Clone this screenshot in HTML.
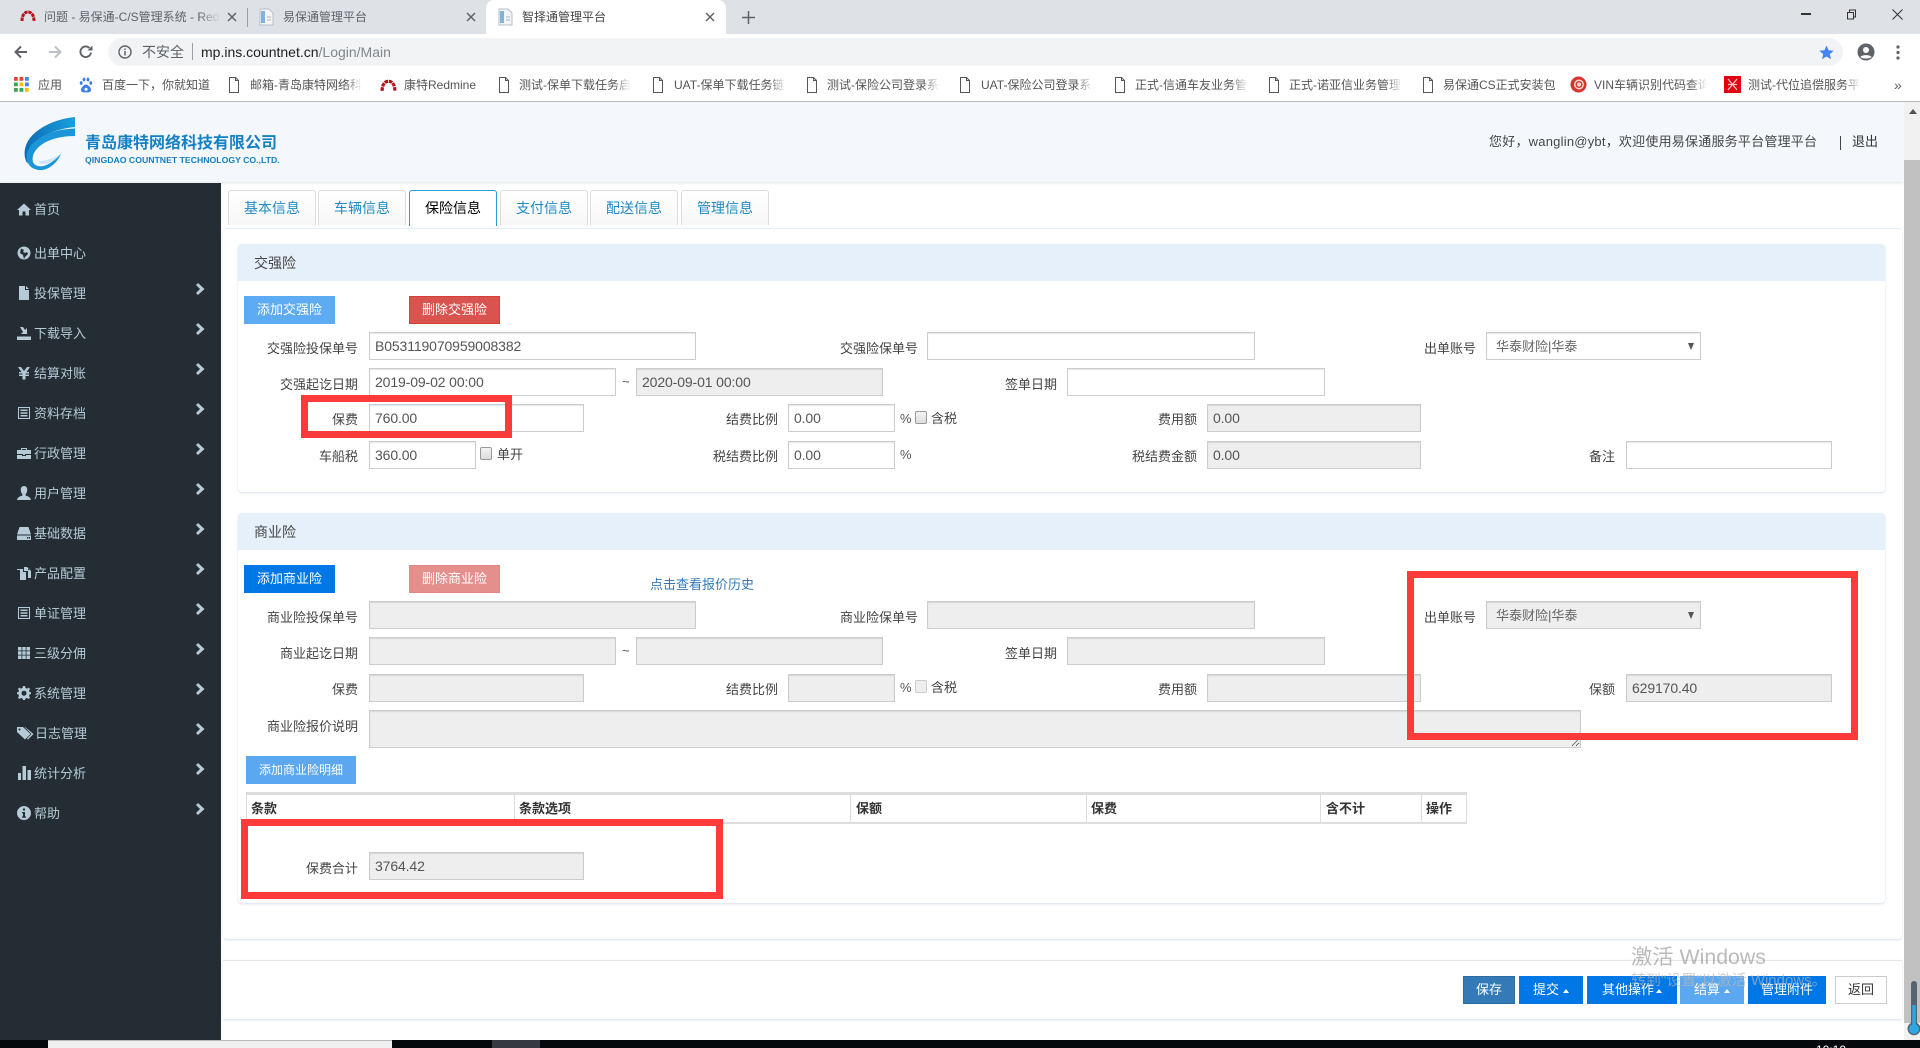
<!DOCTYPE html>
<html lang="zh-CN">
<head>
<meta charset="utf-8">
<title>智择通管理平台</title>
<style>
*{box-sizing:border-box}
html,body{margin:0;padding:0;width:1920px;height:1048px;overflow:hidden;background:#fff}
body{position:relative;font-family:"Liberation Sans","Noto Sans CJK SC",sans-serif;font-size:13px;color:#333}
div,span,svg,input,textarea,a,button{position:absolute}
.t{white-space:nowrap;height:20px;line-height:20px}
.l{white-space:nowrap;height:20px;line-height:20px;width:130px;text-align:right;color:#444}
input,textarea{margin:0;height:28px;border:1px solid #ccc;box-shadow:inset 0 1px 1px rgba(0,0,0,.1);background:#fff;padding:0 5px;font:14px "Liberation Sans","Noto Sans CJK SC",sans-serif;letter-spacing:-.12px;color:#555;outline:0;border-radius:0}
input:disabled,textarea:disabled{background:#eee;color:#555;-webkit-text-fill-color:#555;opacity:1}
.sel{height:28px;border:1px solid #ccc;box-shadow:inset 0 1px 1px rgba(0,0,0,.1);background:#fff;width:215px;left:1486px;color:#666;line-height:28px;padding-left:9px;font-size:13px}
.sel i{position:absolute;right:6px;top:10px;width:0;height:0;border-left:3px solid transparent;border-right:3px solid transparent;border-top:7px solid #555}
.btn{height:28px;line-height:28px;text-align:center;color:#fff;font-size:13px;border:0;padding:0;white-space:nowrap}
.cb{width:12px;height:13px;border:1px solid #999;border-radius:2px;background:linear-gradient(#f3f3f3,#ddd)}
.cbd{border-color:#ccc;background:#eee}
.tab{top:190px;height:35px;width:88px;border:1px solid #ddd;border-bottom:0;border-radius:3px 3px 0 0;background:linear-gradient(#fff,#f7f7f7);text-align:center;line-height:35px;font-size:14px;color:#1f8ac4}
.panel{left:238px;width:1647px;background:#fff;border-radius:4px;box-shadow:0 1px 2px rgba(120,150,190,.3)}
.phead{left:238px;width:1647px;height:37px;background:#e6f0fa;border-radius:4px 4px 0 0;line-height:39px;padding-left:16px;font-size:14px;color:#444}
.nav{left:34px;white-space:nowrap;height:20px;line-height:20px;color:#b6cbd6;font-size:13px}
.ic{left:17px;width:14px;height:14px;fill:#b6cbd6}
.ch{left:196px;width:9px;height:12px}
.th{top:795px;height:27px;line-height:27px;font-weight:bold;font-size:13px;color:#333;white-space:nowrap}
.vl{top:795px;height:27px;width:1px;background:#ddd}
.red{border:7px solid #ff3a3a;background:transparent}
.bm{top:75px;height:20px;line-height:20px;font-size:12px;color:#555;white-space:nowrap;overflow:hidden;-webkit-mask-image:linear-gradient(90deg,#000 85%,transparent)}
.bmf{-webkit-mask-image:none}
.doc{top:77px;width:12px;height:16px;fill:none;stroke:#555;stroke-width:1}
.ct{top:7px;height:20px;line-height:20px;font-size:12px;color:#5f6368;white-space:nowrap}
.x{top:12px;width:10px;height:10px;stroke:#5f6368;stroke-width:1.5;fill:none}
.fb{top:976px;height:28px;line-height:28px;text-align:center;background:#0077e6;color:#fff;font-size:13px;white-space:nowrap}
.fb i{position:absolute;top:13px;width:0;height:0;border-left:3.5px solid transparent;border-right:3.5px solid transparent;border-bottom:4px solid #fff}
</style>
</head>
<body>
<svg width="0" height="0" style="left:0;top:0">
  <symbol id="d" viewBox="0 0 12 16"><path d="M1.5 .5H7.5L10.5 3.5V15.5H1.5ZM7.5 .5V3.5H10.5"/></symbol>
  <symbol id="c" viewBox="0 0 9 12"><path d="M0 2L2 0L8.500 6L2 12L0 10L4 6Z" fill="#b6cbd6"/></symbol>
  <symbol id="rm" viewBox="0 0 16 12"><path d="M2 11C2 6 4 2 8 2S14 6 14 11" fill="none" stroke="#b5121b" stroke-width="3" stroke-dasharray="3.4 .7"/></symbol>
</svg>

<!-- browser chrome -->
<div style="left:0;top:0;width:1920px;height:34px;background:#dee1e6"></div>
<div style="left:486px;top:0;width:240px;height:34px;background:#fff;border-radius:8px 8px 0 0"></div>
<svg style="left:20px;top:10px;width:16px;height:12px"><use href="#rm"/></svg>
<div class="ct" style="left:44px;width:176px;overflow:hidden;-webkit-mask-image:linear-gradient(90deg,#000 88%,transparent)">问题 - 易保通-C/S管理系统 - Redmine</div>
<svg class="x" style="left:227px" viewBox="0 0 10 10"><path d="M1 1L9 9M9 1L1 9"/></svg>
<div style="left:247px;top:8px;width:1px;height:19px;background:#9aa0a6"></div>
<svg style="left:259px;top:8px;width:15px;height:18px" viewBox="0 0 15 18"><path d="M1 1H10L14 5V17H1Z" fill="#f2f4f6" stroke="#b6bfc8"/><rect x="2" y="3" width="4" height="12" fill="#7fb3da"/><path d="M8 9H12M8 12H12" stroke="#aab3bb"/></svg>
<div class="ct" style="left:283px">易保通管理平台</div>
<svg class="x" style="left:466px" viewBox="0 0 10 10"><path d="M1 1L9 9M9 1L1 9"/></svg>
<svg style="left:498px;top:8px;width:15px;height:18px" viewBox="0 0 15 18"><path d="M1 1H10L14 5V17H1Z" fill="#f2f4f6" stroke="#b6bfc8"/><rect x="2" y="3" width="4" height="12" fill="#7fb3da"/><path d="M8 9H12M8 12H12" stroke="#aab3bb"/></svg>
<div class="ct" style="left:522px;color:#444">智择通管理平台</div>
<svg class="x" style="left:705px" viewBox="0 0 10 10"><path d="M1 1L9 9M9 1L1 9"/></svg>
<svg style="left:742px;top:11px;width:13px;height:13px" viewBox="0 0 13 13"><path d="M6.500 0V13M0 6.500H13" stroke="#5f6368" stroke-width="1.500"/></svg>
<div style="left:1801px;top:13px;width:10px;height:1.500px;background:#333"></div>
<svg style="left:1846px;top:9px;width:11px;height:11px" viewBox="0 0 11 11"><path d="M1.500 3.500H7.500V10H1.500ZM3.500 3.500V1H9.500V8H7.500" fill="none" stroke="#333"/></svg>
<svg style="left:1892px;top:9px;width:11px;height:11px" viewBox="0 0 11 11"><path d="M.5 .5L10.500 10.500M10.500 .5L.5 10.500" stroke="#333"/></svg>

<div style="left:0;top:34px;width:1920px;height:67px;background:#fff"></div>
<div style="left:108px;top:38px;width:1735px;height:28px;background:#f1f3f4;border-radius:14px"></div>
<svg style="left:13px;top:44px;width:16px;height:16px" viewBox="0 0 16 16"><path d="M14 8H3M8 2.500L2.500 8L8 13.500" fill="none" stroke="#5f6368" stroke-width="2"/></svg>
<svg style="left:47px;top:44px;width:16px;height:16px" viewBox="0 0 16 16"><path d="M2 8H13M8 2.500L13.500 8L8 13.500" fill="none" stroke="#bdc1c6" stroke-width="2"/></svg>
<svg style="left:78px;top:44px;width:16px;height:16px" viewBox="0 0 16 16"><path d="M13 8.500A5.300 5.300 0 1 1 11.500 4" fill="none" stroke="#5f6368" stroke-width="1.900"/><path d="M9.500 6.500H14.500V1.500Z" fill="#5f6368"/></svg>
<svg style="left:118px;top:45px;width:14px;height:14px" viewBox="0 0 14 14"><circle cx="7" cy="7" r="6" fill="none" stroke="#5f6368" stroke-width="1.400"/><path d="M7 6V10.500M7 3.500V5" stroke="#5f6368" stroke-width="1.500"/></svg>
<div class="t" style="left:142px;top:42px;font-size:14px;color:#5f6368">不安全</div>
<div style="left:192px;top:43px;width:1px;height:17px;background:#9aa0a6"></div>
<div class="t" style="left:201px;top:42px;font-size:14px;color:#202124">mp.ins.countnet.cn<span style="position:static;color:#80868b">/Login/Main</span></div>
<svg style="left:1819px;top:45px;width:15px;height:15px" viewBox="0 0 15 15"><path d="M7.500 .5L9.600 5.300L14.700 5.700L10.800 9.100L12 14.200L7.500 11.500L3 14.200L4.200 9.100L.3 5.700L5.400 5.300Z" fill="#4285f4"/></svg>
<svg style="left:1857px;top:43px;width:18px;height:18px" viewBox="0 0 18 18"><circle cx="9" cy="9" r="8.500" fill="#5f6368"/><circle cx="9" cy="7" r="3" fill="#fff"/><path d="M3.500 14C5 11.500 13 11.500 14.500 14C13 16 5 16 3.500 14Z" fill="#fff"/></svg>
<svg style="left:1896px;top:45px;width:4px;height:15px" viewBox="0 0 4 15"><circle cx="2" cy="2" r="1.600" fill="#5f6368"/><circle cx="2" cy="7.500" r="1.600" fill="#5f6368"/><circle cx="2" cy="13" r="1.600" fill="#5f6368"/></svg>

<!-- bookmarks -->
<svg style="left:14px;top:77px;width:15px;height:15px" viewBox="0 0 15 15"><g fill="#ea4335"><rect width="3.800" height="3.800"/><rect x="5.500" width="3.800" height="3.800"/></g><rect x="11" width="3.800" height="3.800" fill="#4285f4"/><rect y="5.500" width="3.800" height="3.800" fill="#34a853"/><rect x="5.500" y="5.500" width="3.800" height="3.800" fill="#fbbc05"/><rect x="11" y="5.500" width="3.800" height="3.800" fill="#4285f4"/><rect y="11" width="3.800" height="3.800" fill="#34a853"/><rect x="5.500" y="11" width="3.800" height="3.800" fill="#34a853"/><rect x="11" y="11" width="3.800" height="3.800" fill="#fbbc05"/></svg>
<div class="bm bmf" style="left:38px;width:30px">应用</div>
<svg style="left:79px;top:77px;width:14px;height:16px" viewBox="0 0 14 16"><g fill="#3b7de8"><ellipse cx="2.200" cy="6" rx="1.400" ry="1.900"/><ellipse cx="11.800" cy="6" rx="1.400" ry="1.900"/><ellipse cx="5" cy="2.500" rx="1.400" ry="1.900"/><ellipse cx="9" cy="2.500" rx="1.400" ry="1.900"/><path d="M7 7.500C5 7.500 2 10.500 2 13C2 15 4 15.800 7 15.200C10 15.800 12 15 12 13C12 10.500 9 7.500 7 7.500Z"/></g><circle cx="7" cy="12.300" r="1.600" fill="#fff"/></svg>
<div class="bm bmf" style="left:102px;width:110px">百度一下，你就知道</div>
<svg class="doc" style="left:228px"><use href="#d"/></svg>
<div class="bm" style="left:250px;width:112px">邮箱-青岛康特网络科技有限公司</div>
<svg style="left:380px;top:79px;width:17px;height:13px"><use href="#rm"/></svg>
<div class="bm bmf" style="left:404px;width:78px">康特Redmine</div>
<svg class="doc" style="left:498px"><use href="#d"/></svg>
<div class="bm" style="left:519px;width:112px">测试-保单下载任务启动</div>
<svg class="doc" style="left:652px"><use href="#d"/></svg>
<div class="bm" style="left:674px;width:112px">UAT-保单下载任务链接</div>
<svg class="doc" style="left:806px"><use href="#d"/></svg>
<div class="bm" style="left:827px;width:113px">测试-保险公司登录系统</div>
<svg class="doc" style="left:959px"><use href="#d"/></svg>
<div class="bm" style="left:981px;width:112px">UAT-保险公司登录系统</div>
<svg class="doc" style="left:1114px"><use href="#d"/></svg>
<div class="bm" style="left:1135px;width:113px">正式-信通车友业务管理</div>
<svg class="doc" style="left:1268px"><use href="#d"/></svg>
<div class="bm" style="left:1289px;width:113px">正式-诺亚信业务管理系统</div>
<svg class="doc" style="left:1422px"><use href="#d"/></svg>
<div class="bm bmf" style="left:1443px;width:114px">易保通CS正式安装包</div>
<svg style="left:1570px;top:76px;width:17px;height:17px" viewBox="0 0 17 17"><circle cx="8.500" cy="8.500" r="8" fill="#d8332c"/><circle cx="9" cy="8.500" r="5" fill="#f6d8d4"/><circle cx="9" cy="8.500" r="2.800" fill="none" stroke="#d8332c" stroke-width="1.400"/></svg>
<div class="bm" style="left:1594px;width:113px">VIN车辆识别代码查询</div>
<svg style="left:1724px;top:76px;width:17px;height:17px" viewBox="0 0 17 17"><rect width="17" height="17" fill="#e3000f"/><path d="M4 3L13 14M13 3L4 14M4 8.500H13" stroke="#f6c3c3" stroke-width="1.300"/></svg>
<div class="bm" style="left:1748px;width:113px">测试-代位追偿服务平台</div>
<div class="t" style="left:1894px;top:75px;color:#5f6368;font-size:14px">»</div>
<div style="left:0;top:101px;width:1920px;height:1px;background:#bbb"></div>

<!-- page header -->
<div style="left:0;top:102px;width:1904px;height:80px;background:#f4f8fd;box-shadow:0 1px 3px rgba(100,120,140,.2)"></div>
<svg style="left:15px;top:110px;width:75px;height:65px" viewBox="0 0 75 65">
  <defs><linearGradient id="g1" x1="0" y1="0" x2="1" y2="0"><stop offset="0" stop-color="#0d6db5"/><stop offset="1" stop-color="#19a0dc"/></linearGradient></defs>
  <path d="M60 7V17C40 19 24 26 17 38C14 44 12 49 12.500 54C8.500 47 8.500 39 13 31C21 18 40 9 60 7Z" fill="url(#g1)"/>
  <path d="M60 18.500V26C41 26 25 32 19 43C16 50 18 55 23 56C30 58 38 52 46 44C42 53 33 61 24 60C14 59 10 51 12.500 42C17 28 38 19 60 18.500Z" fill="#1b95d8"/>
  <path d="M23 51C31 51 40 48 46 43.500C41 50 33 55 26 54Z" fill="#cfe6f5"/>
</svg>
<div class="t" style="left:85px;top:134px;font-size:16px;font-weight:bold;color:#1580c4">青岛康特网络科技有限公司</div>
<div class="t" style="left:85px;top:150px;font-size:8.700px;font-weight:bold;color:#1580c4">QINGDAO COUNTNET TECHNOLOGY CO.,LTD.</div>
<div class="t" style="left:1489px;top:132px;color:#444;letter-spacing:.22px">您好，wanglin@ybt，欢迎使用易保通服务平台管理平台</div>
<div style="left:1840px;top:136px;width:1px;height:14px;background:#444"></div>
<div class="t" style="left:1852px;top:132px;color:#333">退出</div>

<!-- sidebar -->
<div style="left:0;top:183px;width:221px;height:857px;background:#232d33"></div>
<svg class="ic" style="top:202px" viewBox="0 0 14 14"><path d="M7 1.500L14 8H12V13.500H8.500V9.500H5.500V13.500H2V8H0Z"/></svg><div class="nav" style="top:200px">首页</div>
<svg class="ic" style="top:246px" viewBox="0 0 14 14"><circle cx="7" cy="7" r="6.500"/><path d="M4 2.500L7 4L6 6L8 7L10 6L11 8L8 11L7 13L6 9L3 7Z" fill="#232d33"/></svg><div class="nav" style="top:244px">出单中心</div>
<svg class="ic" style="top:286px" viewBox="0 0 14 14"><path d="M2 0H8V4H12V14H2ZM9 0L12 3H9Z"/></svg><div class="nav" style="top:284px">投保管理</div>
<svg class="ic" style="top:326px" viewBox="0 0 14 14"><path d="M0 10.500H14V14H0ZM3 1L6 1L8 4L10 2V8H4L6 6Z"/></svg><div class="nav" style="top:324px">下载导入</div>
<svg class="ic" style="top:366px" viewBox="0 0 14 14"><path d="M1 1H4L7 5L10 1H13L9.500 6H12V7.500H8.500V8.500H12V10H8.500V13.500H5.500V10H2V8.500H5.500V7.500H2V6H4.500Z"/></svg><div class="nav" style="top:364px">结算对账</div>
<svg class="ic" style="top:406px" viewBox="0 0 14 14"><path d="M1 1H13V13H1ZM2 2V12H12V2ZM3.500 3.500H10.500V5H3.500ZM3.500 6.300H10.500V7.700H3.500ZM3.500 9H10.500V10.500H3.500Z" fill-rule="evenodd"/></svg><div class="nav" style="top:404px">资料存档</div>
<svg class="ic" style="top:446px" viewBox="0 0 14 14"><path d="M0 4H4V2H10V4H14V8H8V9H6V8H0ZM5 3V4H9V3ZM0 9H5V10H9V9H14V13H0Z"/></svg><div class="nav" style="top:444px">行政管理</div>
<svg class="ic" style="top:486px" viewBox="0 0 14 14"><path d="M7 0C9.500 0 10.500 2 10.200 4.500C10 6.500 9 8 8.500 8.500V9.500C10.500 10 13.500 11 14 14H0C.5 11 3.500 10 5.500 9.500V8.500C5 8 4 6.500 3.800 4.500C3.500 2 4.500 0 7 0Z"/></svg><div class="nav" style="top:484px">用户管理</div>
<svg class="ic" style="top:526px" viewBox="0 0 14 14"><path d="M2.500 1H11.500L14 8.500H0ZM0 9.500H14V14H0ZM10 11V12.500H11.500V11ZM12 11V12.500H13V11Z" fill-rule="evenodd"/></svg><div class="nav" style="top:524px">基础数据</div>
<svg class="ic" style="top:566px" viewBox="0 0 14 14"><path d="M0 4H3V14H9V6H6V3H0ZM7 1V5H11V12H14V5L10 1ZM11 1.500L13.500 4H11Z"/></svg><div class="nav" style="top:564px">产品配置</div>
<svg class="ic" style="top:606px" viewBox="0 0 14 14"><path d="M1 1H13V13H1ZM2 2V12H12V2ZM3.500 3.500H10.500V5H3.500ZM3.500 6.300H10.500V7.700H3.500ZM3.500 9H10.500V10.500H3.500Z" fill-rule="evenodd"/></svg><div class="nav" style="top:604px">单证管理</div>
<svg class="ic" style="top:646px" viewBox="0 0 14 14"><path d="M1 1H4.500V4.500H1ZM5.300 1H8.700V4.500H5.300ZM9.500 1H13V4.500H9.500ZM1 5.300H4.500V8.700H1ZM5.300 5.300H8.700V8.700H5.300ZM9.500 5.300H13V8.700H9.500ZM1 9.500H4.500V13H1ZM5.300 9.500H8.700V13H5.300ZM9.500 9.500H13V13H9.500Z"/></svg><div class="nav" style="top:644px">三级分佣</div>
<svg class="ic" style="top:686px" viewBox="0 0 14 14"><path d="M6 0H8L8.500 2L10 2.600L11.800 1.600L13 3L12 4.700L12.500 6L14 6.500V8L12.500 8.500L12 10L13 11.700L11.700 13L10 12L8.500 12.500L8 14H6L5.500 12.500L4 12L2.300 13L1 11.700L2 10L1.500 8.500L0 8V6.500L1.500 6L2 4.700L1 3L2.200 1.600L4 2.600L5.500 2ZM7 4.700A2.500 2.500 0 1 0 7.010 4.700Z" fill-rule="evenodd"/></svg><div class="nav" style="top:684px">系统管理</div>
<svg style="left:17px;top:726px;width:17px;height:14px;fill:#b6cbd6" viewBox="0 0 17 14"><path d="M0 1H6L13.500 8L8 13.500L0 6ZM2.500 2.500A1 1 0 1 0 2.510 2.500ZM8 1L16.500 8L11 13.500L10 12.500L14.500 8L7.500 1Z" fill-rule="evenodd"/></svg><div class="nav" style="left:35px;top:724px">日志管理</div>
<svg class="ic" style="top:766px;left:18px" viewBox="0 0 14 14"><path d="M0 7H3V14H0ZM4.500 0H8V14H4.500ZM9.500 4H13V14H9.500Z"/></svg><div class="nav" style="top:764px">统计分析</div>
<svg class="ic" style="top:806px" viewBox="0 0 14 14"><path d="M7 0A7 7 0 1 1 6.990 0ZM6 2.500V4.500H8V2.500ZM5 6V7.200H6V10.500H5V11.700H9V10.500H8V6Z" fill-rule="evenodd"/></svg><div class="nav" style="top:804px">帮助</div>
<svg class="ch" style="top:283px"><use href="#c"/></svg>
<svg class="ch" style="top:323px"><use href="#c"/></svg>
<svg class="ch" style="top:363px"><use href="#c"/></svg>
<svg class="ch" style="top:403px"><use href="#c"/></svg>
<svg class="ch" style="top:443px"><use href="#c"/></svg>
<svg class="ch" style="top:483px"><use href="#c"/></svg>
<svg class="ch" style="top:523px"><use href="#c"/></svg>
<svg class="ch" style="top:563px"><use href="#c"/></svg>
<svg class="ch" style="top:603px"><use href="#c"/></svg>
<svg class="ch" style="top:643px"><use href="#c"/></svg>
<svg class="ch" style="top:683px"><use href="#c"/></svg>
<svg class="ch" style="top:723px"><use href="#c"/></svg>
<svg class="ch" style="top:763px"><use href="#c"/></svg>
<svg class="ch" style="top:803px"><use href="#c"/></svg>

<!-- tabs -->
<div class="tab" style="left:228px">基本信息</div>
<div class="tab" style="left:318px">车辆信息</div>
<div class="tab" style="left:409px;background:#fff;color:#000;border-color:#2a9fd6;border-bottom:0;height:36px">保险信息</div>
<div class="tab" style="left:500px">支付信息</div>
<div class="tab" style="left:590px">配送信息</div>
<div class="tab" style="left:681px">管理信息</div>

<!-- main panel -->
<div style="left:223px;top:228px;width:1679px;height:711px;background:#fff;border-top:1px solid #e4eefa;border-radius:4px;box-shadow:0 1px 2px rgba(120,150,190,.3)"></div>
<div class="panel" style="top:244px;height:248px"></div>
<div class="phead" style="top:244px">交强险</div>

<button class="btn" style="left:244px;top:296px;width:91px;background:#5cabf3">添加交强险</button>
<button class="btn" style="left:409px;top:296px;width:91px;background:#d9534f;border:1px solid #d43f3a;line-height:26px">删除交强险</button>

<div class="l" style="left:228px;top:339px">交强险投保单号</div>
<input style="left:369px;top:332px;width:327px" value="B053119070959008382">
<div class="l" style="left:788px;top:339px">交强险保单号</div>
<input style="left:927px;top:332px;width:328px">
<div class="l" style="left:1346px;top:339px">出单账号</div>
<div class="sel" style="top:332px">华泰财险|华泰<i></i></div>

<div class="l" style="left:228px;top:375px">交强起讫日期</div>
<input style="left:369px;top:368px;width:247px" value="2019-09-02 00:00">
<div class="t" style="left:622px;top:372px;color:#555">~</div>
<input disabled style="left:636px;top:368px;width:247px" value="2020-09-01 00:00">
<div class="l" style="left:927px;top:375px">签单日期</div>
<input style="left:1067px;top:368px;width:258px">

<div class="l" style="left:228px;top:410px">保费</div>
<input style="left:369px;top:404px;width:215px" value="760.00">
<div class="l" style="left:648px;top:410px">结费比例</div>
<input style="left:788px;top:404px;width:107px" value="0.00">
<div class="t" style="left:900px;top:409px;color:#555">%</div>
<div class="cb" style="left:915px;top:411px"></div>
<div class="t" style="left:931px;top:409px;color:#444">含税</div>
<div class="l" style="left:1067px;top:410px">费用额</div>
<input disabled style="left:1207px;top:404px;width:214px" value="0.00">

<div class="l" style="left:228px;top:447px">车船税</div>
<input style="left:369px;top:441px;width:107px" value="360.00">
<div class="cb" style="left:480px;top:447px"></div>
<div class="t" style="left:497px;top:445px;color:#444">单开</div>
<div class="l" style="left:648px;top:447px">税结费比例</div>
<input style="left:788px;top:441px;width:107px" value="0.00">
<div class="t" style="left:900px;top:445px;color:#555">%</div>
<div class="l" style="left:1067px;top:447px">税结费金额</div>
<input disabled style="left:1207px;top:441px;width:214px" value="0.00">
<div class="l" style="left:1485px;top:447px">备注</div>
<input style="left:1626px;top:441px;width:206px">

<!-- commercial -->
<div class="panel" style="top:513px;height:390px"></div>
<div class="phead" style="top:513px">商业险</div>

<button class="btn" style="left:244px;top:565px;width:91px;background:#0077e6">添加商业险</button>
<button class="btn" style="left:409px;top:565px;width:91px;background:#e58f8c;border:1px solid #e38885;line-height:26px">删除商业险</button>
<a class="t" style="left:650px;top:575px;color:#337ab7">点击查看报价历史</a>

<div class="l" style="left:228px;top:608px">商业险投保单号</div>
<input disabled style="left:369px;top:601px;width:327px">
<div class="l" style="left:788px;top:608px">商业险保单号</div>
<input disabled style="left:927px;top:601px;width:328px">
<div class="l" style="left:1346px;top:608px">出单账号</div>
<div class="sel" style="top:601px;background:#eee">华泰财险|华泰<i></i></div>

<div class="l" style="left:228px;top:644px">商业起讫日期</div>
<input disabled style="left:369px;top:637px;width:247px">
<div class="t" style="left:622px;top:641px;color:#555">~</div>
<input disabled style="left:636px;top:637px;width:247px">
<div class="l" style="left:927px;top:644px">签单日期</div>
<input disabled style="left:1067px;top:637px;width:258px">

<div class="l" style="left:228px;top:680px">保费</div>
<input disabled style="left:369px;top:674px;width:215px">
<div class="l" style="left:648px;top:680px">结费比例</div>
<input disabled style="left:788px;top:674px;width:107px">
<div class="t" style="left:900px;top:678px;color:#555">%</div>
<div class="cb cbd" style="left:915px;top:680px"></div>
<div class="t" style="left:931px;top:678px;color:#444">含税</div>
<div class="l" style="left:1067px;top:680px">费用额</div>
<input disabled style="left:1207px;top:674px;width:214px">
<div class="l" style="left:1485px;top:680px">保额</div>
<input disabled style="left:1626px;top:674px;width:206px" value="629170.40">

<div class="l" style="left:228px;top:717px">商业险报价说明</div>
<textarea disabled style="left:369px;top:710px;width:1212px;height:38px"></textarea>

<button class="btn" style="left:246px;top:756px;width:110px;background:#5ba8f0;font-size:12px">添加商业险明细</button>

<div style="left:246px;top:792px;width:1221px;height:32px;border-top:3px solid #ddd;border-bottom:2px solid #ddd;border-left:1px solid #ddd;border-right:1px solid #ddd"></div>
<div class="vl" style="left:514px"></div>
<div class="vl" style="left:850px"></div>
<div class="vl" style="left:1086px"></div>
<div class="vl" style="left:1320px"></div>
<div class="vl" style="left:1421px"></div>
<div class="th" style="left:251px">条款</div>
<div class="th" style="left:519px">条款选项</div>
<div class="th" style="left:856px">保额</div>
<div class="th" style="left:1091px">保费</div>
<div class="th" style="left:1326px">含不计</div>
<div class="th" style="left:1426px">操作</div>

<div class="l" style="left:228px;top:859px">保费合计</div>
<input disabled style="left:369px;top:852px;width:215px" value="3764.42">

<!-- annotations -->
<div class="red" style="left:301px;top:395px;width:211px;height:43px"></div>
<div class="red" style="left:241px;top:819px;width:482px;height:80px"></div>
<div class="red" style="left:1407px;top:571px;width:451px;height:169px"></div>

<!-- footer -->
<div style="left:223px;top:960px;width:1679px;height:59px;background:#fff;border-top:1px solid #e6e6e6;box-shadow:0 1px 2px rgba(120,150,190,.3)"></div>
<div class="fb" style="left:1463px;width:52px;background:#337ab7;border:1px solid #2e6da4;line-height:26px">保存</div>
<div class="fb" style="left:1519px;width:64px;padding-right:10px">提交<i style="left:44px"></i></div>
<div class="fb" style="left:1587px;width:90px;padding-right:8px">其他操作<i style="left:69px"></i></div>
<div class="fb" style="left:1680px;width:64px;padding-right:10px;background:#5ba8f0">结算<i style="left:44px"></i></div>
<div class="fb" style="left:1748px;width:78px">管理附件</div>
<div class="fb" style="left:1835px;width:52px;background:#fff;color:#333;border:1px solid #ccc;line-height:26px">返回</div>

<div class="t" style="left:1631px;top:945px;font-size:21.300px;color:rgba(120,120,120,.5);height:24px;line-height:24px">激活 Windows</div>
<div class="t" style="left:1631px;top:971px;font-size:15px;color:rgba(185,185,185,.65)">转到"设置"以激活 Windows。</div>

<!-- scrollbar -->
<div style="left:1904px;top:102px;width:16px;height:938px;background:#f1f1f1"></div>
<div style="left:1904px;top:160px;width:16px;height:863px;background:#c1c1c1"></div>
<div style="left:1909px;top:109px;width:0;height:0;border-left:4px solid transparent;border-right:4px solid transparent;border-bottom:5px solid #505050"></div>
<svg style="left:1906px;top:979px;width:14px;height:60px" viewBox="0 0 14 60">
  <path d="M5 5A3 3 0 0 1 11 5V44A6.500 6.500 0 1 1 5 44Z" fill="#55646f"/>
  <rect x="6.300" y="26" width="3.400" height="22" fill="#2ea8e3"/>
  <circle cx="8" cy="50" r="5" fill="#2ea8e3"/>
</svg>

<!-- taskbar -->
<div style="left:0;top:1040px;width:1920px;height:8px;background:#05090e"></div>
<div style="left:48px;top:1040px;width:344px;height:8px;background:#f0f0f0;border-top:1px solid #bbb"></div>
<div style="left:492px;top:1040px;width:48px;height:8px;background:#36393f"></div>
<div class="t" style="left:1816px;top:1045px;width:32px;height:3px;overflow:hidden;color:#fff;font-size:12px;line-height:11px">10:10</div>
</body>
</html>
